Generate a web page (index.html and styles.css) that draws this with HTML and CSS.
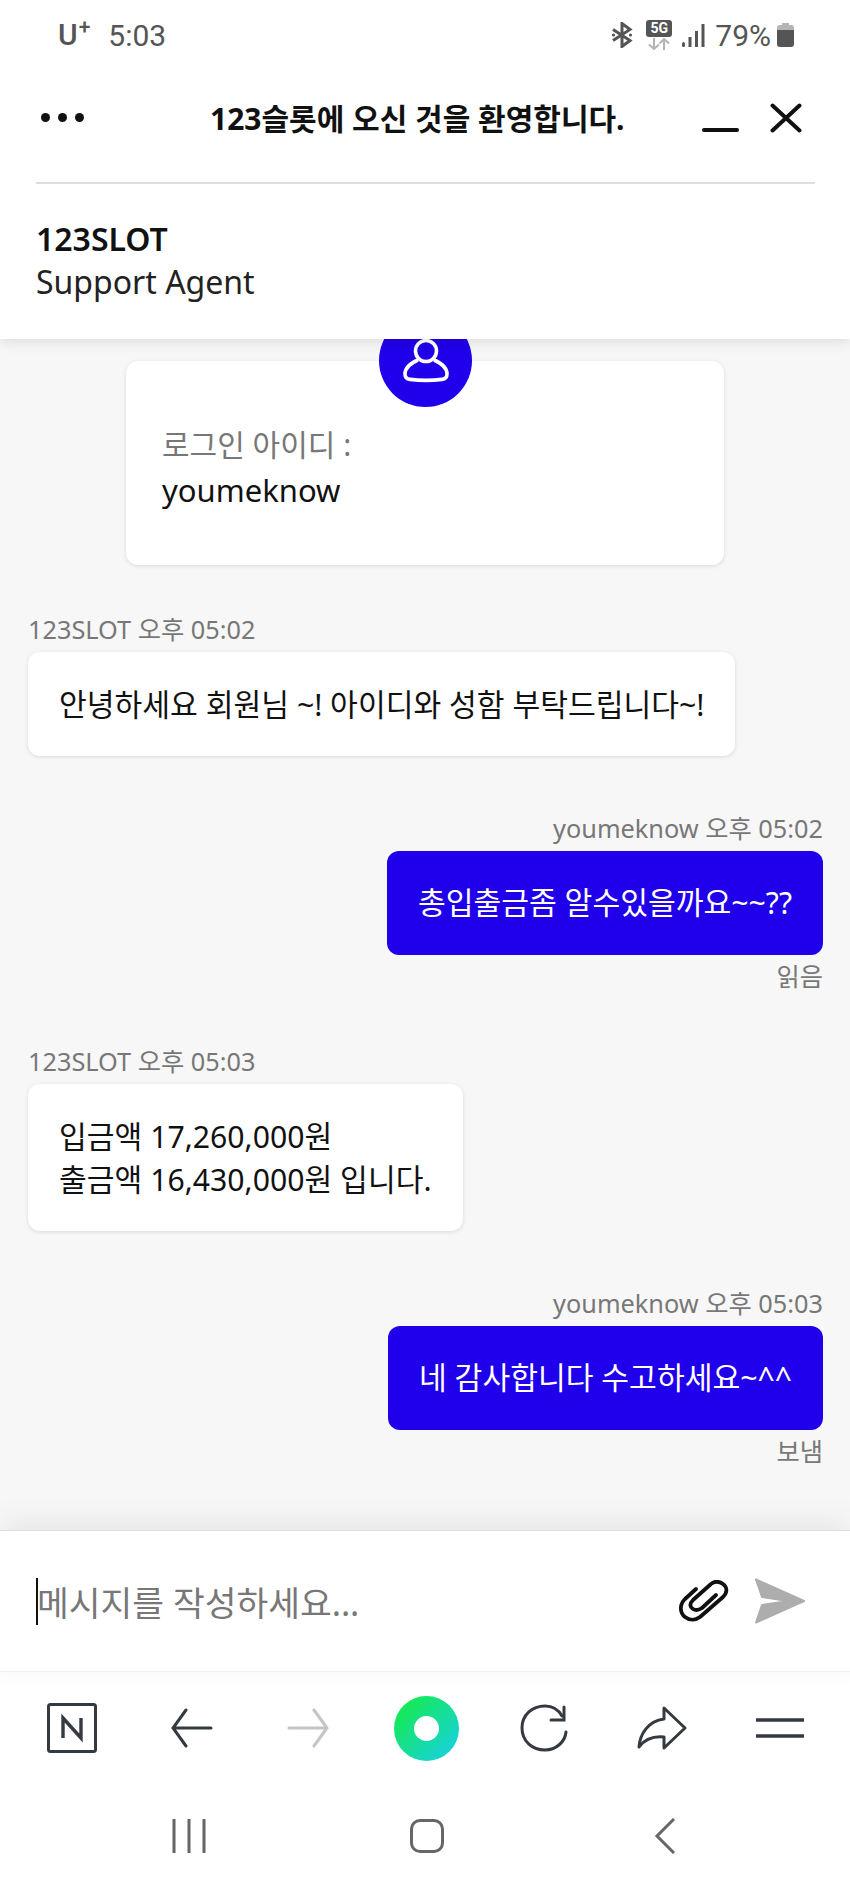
FILE: index.html
```html
<!DOCTYPE html>
<html lang="ko">

<head>
    <meta charset="UTF-8">
    <title>123SLOT 채팅</title>
    <link rel="stylesheet" href="styles.css">
</head>

<body>
    <div class="phone">
        <div class="status-bar">
            <div class="status-left">
                <span class="carrier">U<sup>+</sup></span>
                <span class="clock">5:03</span>
            </div>
            <div class="status-right">
                <svg class="ic-bt" width="22" height="26" viewBox="0 0 22 26" fill="none" stroke="#555" stroke-width="3">
                    <path d="M2 7.5 L19 18.5 L11 24.5 V1.5 L19 7.5 L2 18.5" />
                    <circle cx="2.5" cy="13" r="1.6" fill="#555" stroke="none" />
                    <circle cx="19.5" cy="13" r="1.6" fill="#555" stroke="none" />
                </svg>
                <div class="net">
                    <span class="net-5g">5G</span>
                    <svg width="24" height="12" viewBox="0 0 24 12" fill="none" stroke="#b4b4b4" stroke-width="2">
                        <path d="M7 0 V11 M2 6.5 L7 11 L12 6.5" />
                        <path d="M17 12 V1 M12.5 5.5 L17 1 L22 5.5" />
                    </svg>
                </div>
                <svg class="ic-signal" width="23" height="23" viewBox="0 0 23 23" fill="#555">
                    <rect x="0" y="18" width="3" height="5" rx="1.5" />
                    <rect x="6.5" y="13" width="3" height="10" />
                    <rect x="13" y="7" width="3" height="16" />
                    <rect x="19.5" y="0" width="3" height="23" />
                </svg>
                <span class="battery-text">79%</span>
                <svg class="ic-battery" width="17" height="24" viewBox="0 0 17 24">
                    <path d="M5 0 H12 V2 H14 Q17 2 17 5 V8 H0 V5 Q0 2 3 2 H5 Z" fill="#b5b5b5" />
                    <path d="M0 7 H17 V21 Q17 24 14 24 H3 Q0 24 0 21 Z" fill="#555" />
                </svg>
            </div>
        </div>

        <div class="chat-head">
            <div class="title-row">
                <div class="dots"><i></i><i></i><i></i></div>
                <div class="title">123슬롯에 오신 것을 환영합니다.</div>
                <span class="min-btn"></span>
                <svg class="close-btn" width="32" height="30" viewBox="0 0 32 30" fill="none" stroke="#111" stroke-width="4" stroke-linecap="round">
                    <path d="M2.5 2.5 L29.5 27.5 M29.5 2.5 L2.5 27.5" />
                </svg>
            </div>
            <div class="agent">
                <div class="agent-name">123SLOT</div>
                <div class="agent-role">Support Agent</div>
            </div>
        </div>

        <div class="chat-body">
            <div class="login-card">
                <div class="avatar">
                    <svg width="46" height="48" viewBox="0 0 46 48" fill="none" stroke="#fff" stroke-width="3.6" stroke-linejoin="round">
                        <circle cx="23" cy="15" r="10.5" />
                        <path d="M15 24 C8 27 2 32 2 38 C2 42 4 43 7 43.4 C17 44.6 29 44.6 39 43.4 C42 43 44 42 44 38 C44 32 38 27 31 24" />
                    </svg>
                </div>
                <div class="login-label">로그인 아이디 :</div>
                <div class="login-id">youmeknow</div>
            </div>

            <div class="msg">
                <div class="msg-meta">123SLOT 오후 05:02</div>
                <div class="bubble">안녕하세요 회원님 ~! 아이디와 성함 부탁드립니다~!</div>
            </div>

            <div class="msg msg-me">
                <div class="msg-meta">youmeknow 오후 05:02</div>
                <div class="bubble">총입출금좀 알수있을까요~~??</div>
                <div class="msg-status">읽음</div>
            </div>

            <div class="msg">
                <div class="msg-meta">123SLOT 오후 05:03</div>
                <div class="bubble">입금액 17,260,000원<br>출금액 16,430,000원 입니다.</div>
            </div>

            <div class="msg msg-me">
                <div class="msg-meta">youmeknow 오후 05:03</div>
                <div class="bubble">네 감사합니다 수고하세요~^^</div>
                <div class="msg-status">보냄</div>
            </div>
        </div>

        <div class="composer">
            <span class="caret"></span>
            <div class="placeholder">메시지를 작성하세요...</div>
            <svg class="ic-clip" width="50" height="42" viewBox="0 0 50 42" fill="none" stroke="#111" stroke-width="3.8" stroke-linecap="round" stroke-linejoin="round">
                <path d="M17 9 L6 19 C0 25 1 33 6 37 C11 41 17 40 21 37 L44 17 C49 12 48 7 44 4 C40 1 35 1 32 4 L14 20 C10 24 11 27 14 29 C17 31 20 30 23 28 L37 15" />
            </svg>
            <svg class="ic-send" width="52" height="46" viewBox="0 0 52 46" fill="#adadad" stroke="#adadad" stroke-width="2" stroke-linejoin="round">
                <path d="M2 1.5 L50 23 L2 44.5 L8 27 L34 23 L8 19 Z" />
            </svg>
        </div>

        <div class="browser-bar">
            <svg width="50" height="50" viewBox="0 0 50 50" fill="none" stroke="#343a40">
                <rect x="1.5" y="1.5" width="47" height="47" rx="2" stroke-width="3" />
                <path d="M16 35 V15 L34 35 V15" stroke-width="3.4" />
            </svg>
            <svg class="ic-back" width="42" height="40" viewBox="0 0 42 40" fill="none" stroke="#343a40" stroke-width="3" stroke-linecap="round">
                <path d="M40 20 H2 M15 2 L2 20 L15 38" />
            </svg>
            <svg width="42" height="40" viewBox="0 0 42 40" fill="none" stroke="#c4c4c4" stroke-width="3" stroke-linecap="round">
                <path d="M2 20 H40 M27 2 L40 20 L27 38" />
            </svg>
            <span class="whale"></span>
            <svg width="48" height="48" viewBox="0 0 48 48" fill="none" stroke="#343a40" stroke-width="3" stroke-linecap="round">
                <path d="M42 12 C38 5 32 2 25 2 C12 2 2 11 2 24 C2 37 12 46 25 46 C36 46 45 38 46 28" />
                <path d="M44 3 V16 H31" />
            </svg>
            <svg width="50" height="44" viewBox="0 0 50 44" fill="none" stroke="#343a40" stroke-width="3" stroke-linejoin="round" stroke-linecap="round">
                <path d="M27 2 L48 22 L27 42 V31 C17 30 8 33 2 41 C3 28 11 15 27 13 Z" />
            </svg>
            <svg width="50" height="20" viewBox="0 0 50 20" fill="none" stroke="#343a40" stroke-width="3.4">
                <path d="M1 2 H49 M1 18 H49" />
            </svg>
        </div>

        <div class="nav-bar">
            <svg width="34" height="36" viewBox="0 0 34 36" fill="none" stroke="#666" stroke-width="3">
                <path d="M2 1 V35 M17 1 V35 M32 1 V35" />
            </svg>
            <span class="nav-home"></span>
            <svg width="22" height="36" viewBox="0 0 22 36" fill="none" stroke="#666" stroke-width="3">
                <path d="M20 1 L3 18 L20 35" />
            </svg>
        </div>
    </div>
</body>

</html>
```

FILE: styles.css
```css
* {
    box-sizing: border-box;
}

body {
    margin: 0;
    font-family: "Noto Sans", "Noto Sans CJK KR", sans-serif;
    background: #fff;
    color: #111;
}

.phone {
    width: 850px;
    height: 1889px;
    display: flex;
    flex-direction: column;
    overflow: hidden;
}

/* status bar */
.status-bar {
    position: relative;
    z-index: 3;
    height: 70px;
    display: flex;
    justify-content: space-between;
    align-items: center;
    padding: 0 56px 0 58px;
    background: #fff;
    font-family: Roboto, sans-serif;
    color: #555;
}

.status-left {
    display: flex;
    align-items: center;
    gap: 18px;
}

.carrier {
    font-size: 30px;
    font-weight: 500;
    line-height: 36px;
}

.carrier sup {
    font-size: 21px;
    line-height: 0;
    margin-left: 1px;
}

.clock {
    font-size: 30px;
}

.status-right {
    display: flex;
    align-items: center;
}

.net {
    display: flex;
    flex-direction: column;
    align-items: center;
    gap: 1px;
    margin-left: 13px;
}

.net-5g {
    width: 26px;
    height: 17px;
    border-radius: 3px;
    background: #555;
    color: #fff;
    font-size: 14px;
    font-weight: 700;
    line-height: 17px;
    text-align: center;
}

.ic-signal {
    margin-left: 10px;
}

.battery-text {
    margin-left: 10px;
    font-size: 30px;
}

.ic-battery {
    margin-left: 6px;
}

/* chat head */
.chat-head {
    position: relative;
    z-index: 2;
    height: 269px;
    padding: 0 36px;
    background: #fff;
    box-shadow: 0 2px 14px rgba(0, 0, 0, 0.12);
}

.title-row {
    height: 114px;
    display: flex;
    align-items: center;
    padding-bottom: 18px;
    border-bottom: 2px solid #ddd;
    margin-right: -1px;
}

.dots {
    display: flex;
    gap: 8px;
    margin-left: 5px;
}

.dots i {
    width: 9px;
    height: 9px;
    border-radius: 50%;
    background: #111;
}

.title {
    margin-left: 126px;
    font-size: 30px;
    font-weight: 700;
    white-space: nowrap;
}

.min-btn {
    width: 37px;
    height: 4px;
    margin-left: auto;
    margin-top: 26px;
    border-radius: 2px;
    background: #111;
}

.close-btn {
    margin-left: 31px;
    margin-right: 13px;
    margin-top: 2px;
}

.agent {
    padding-top: 33px;
}

.agent-name {
    font-size: 32px;
    font-weight: 600;
    line-height: 44px;
}

.agent-role {
    font-size: 32px;
    line-height: 42px;
    color: #222;
}

/* messages */
.chat-body {
    flex: 1;
    min-height: 0;
    overflow: hidden;
    padding: 22px 27px 0 28px;
    background: #f7f7f7;
}

.login-card {
    position: relative;
    width: 598px;
    height: 204px;
    margin: 0 0 50px 98px;
    padding: 63px 36px 0;
    border-radius: 12px;
    background: #fff;
    box-shadow: 0 1px 4px rgba(0, 0, 0, 0.12);
}

.avatar {
    position: absolute;
    top: -47px;
    left: 253px;
    width: 93px;
    height: 93px;
    padding-top: 22px;
    display: flex;
    justify-content: center;
    border-radius: 50%;
    background: #2000ea;
}

.login-label {
    font-size: 30px;
    line-height: 42px;
    color: #777;
}

.login-id {
    font-size: 31px;
    line-height: 49px;
    color: #111;
}

.msg {
    display: flex;
    flex-direction: column;
    align-items: flex-start;
    margin-bottom: 57.5px;
}

.msg-me {
    align-items: flex-end;
}

.msg-meta,
.msg-status {
    font-size: 25.3px;
    line-height: 28px;
    color: #777;
}

.msg-meta {
    margin-bottom: 9px;
}

.msg-status {
    margin-top: 7px;
}

.bubble {
    padding: 30.5px 31px;
    border-radius: 12px;
    background: #fff;
    font-size: 30.2px;
    line-height: 43px;
    box-shadow: 0 1px 4px rgba(0, 0, 0, 0.12);
}

.msg-me .bubble {
    background: #2000ea;
    color: #fff;
    box-shadow: none;
}

/* input */
.composer {
    position: relative;
    z-index: 1;
    height: 142px;
    flex-shrink: 0;
    display: flex;
    align-items: center;
    padding: 0 44px 0 36px;
    background: #fff;
    border-top: 1px solid #ddd;
    border-bottom: 1px solid #f0f0f0;
    box-shadow: 0 -8px 30px rgba(0, 0, 0, 0.07);
}

.caret {
    width: 2px;
    height: 47px;
    margin-right: -1px;
    background: #111;
}

.placeholder {
    flex: 1;
    font-size: 34.5px;
    color: #777;
}

.ic-clip {
    margin-right: 25px;
}

/* browser toolbar */
.browser-bar {
    height: 110px;
    flex-shrink: 0;
    display: grid;
    grid-template-columns: repeat(7, 118px);
    justify-items: center;
    align-items: center;
    padding: 2px 0 0 13px;
}

.ic-back {
    margin-left: 3px;
}

.whale {
    position: relative;
    width: 65px;
    height: 65px;
    border: 20px solid transparent;
    border-radius: 50%;
    background: linear-gradient(135deg, #14ee3c, #18cfee) border-box;
}

.whale::after {
    content: "";
    position: absolute;
    inset: 0;
    border-radius: 50%;
    background: #fff;
}

/* android nav */
.nav-bar {
    height: 107px;
    flex-shrink: 0;
    display: grid;
    grid-template-columns: repeat(3, 238px);
    justify-items: center;
    align-items: center;
    padding-left: 70px;
}

.nav-home {
    width: 34px;
    height: 34px;
    border: 3px solid #666;
    border-radius: 10px;
}
```
